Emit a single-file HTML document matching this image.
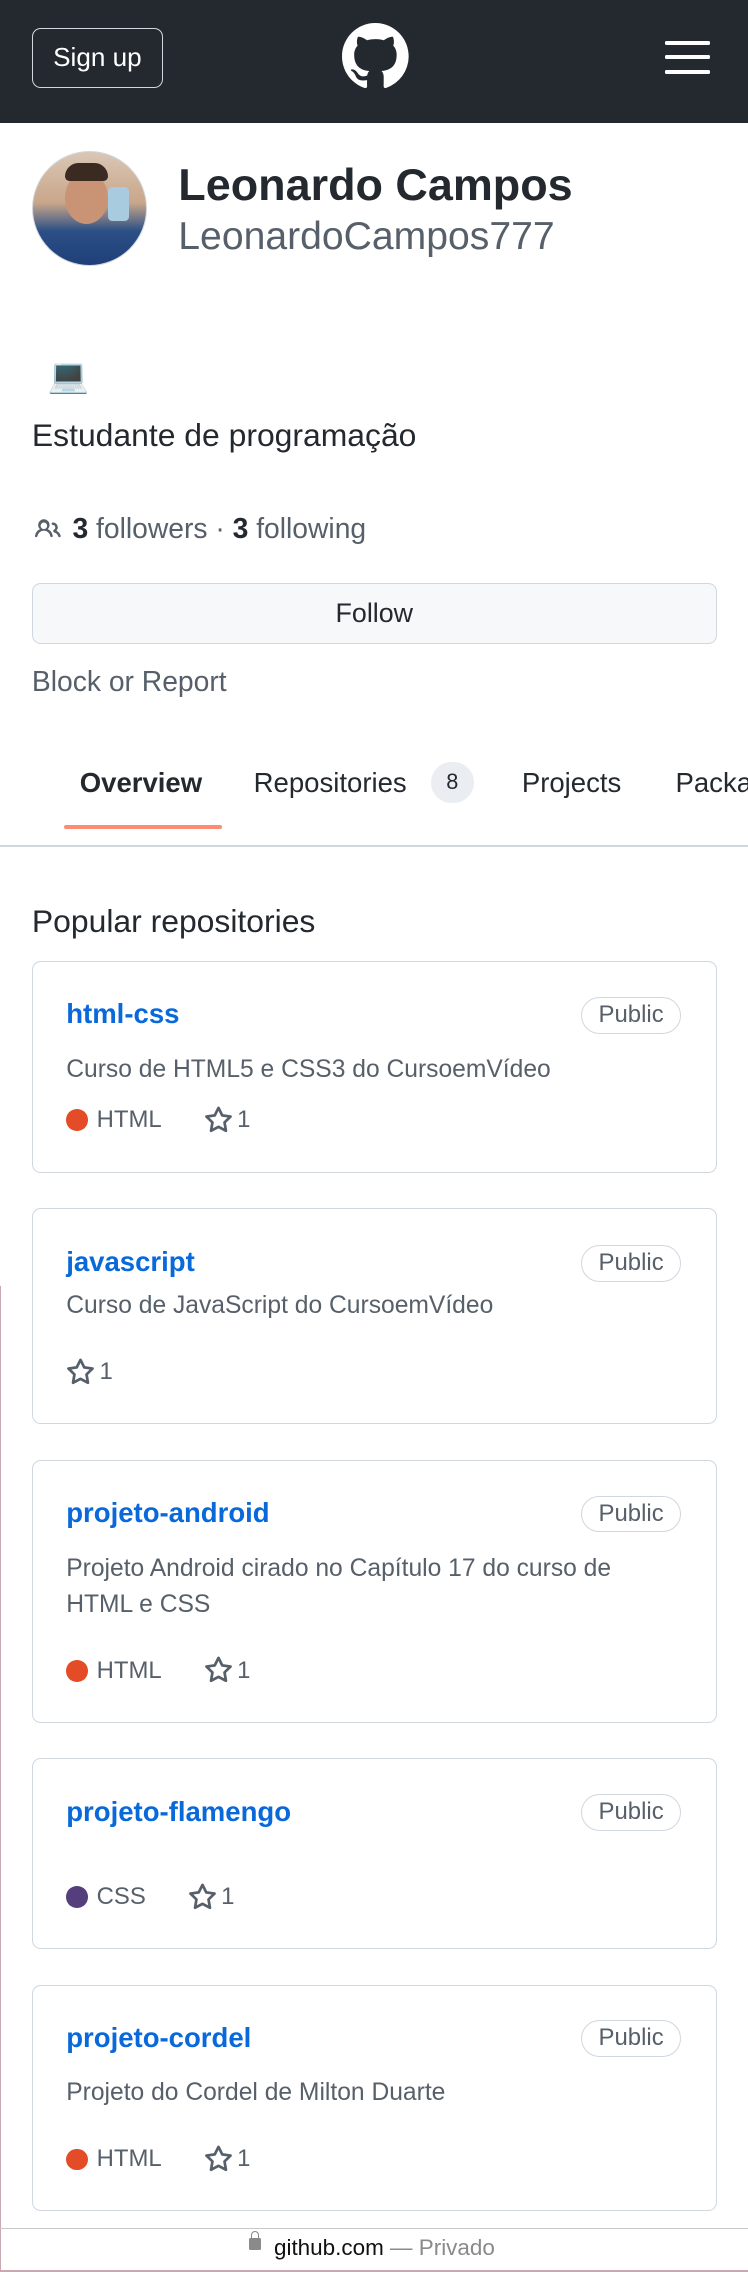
<!DOCTYPE html>
<html><head><meta charset="utf-8"><style>
html,body{margin:0;padding:0;background:#fff;}
body{width:748px;height:2271px;overflow:hidden;position:relative;}
#w{zoom:1.4496;width:516px;height:1567px;position:relative;overflow:hidden;font-family:"Liberation Sans",sans-serif;color:#24292f;}
.a{position:absolute;white-space:nowrap;}
.card{position:absolute;left:22px;width:471px;border:1px solid #d0d7de;border-radius:6px;}
.t{position:absolute;left:23px;font-size:19px;font-weight:bold;color:#0969da;}
.pub{position:absolute;left:378px;width:68px;height:24px;border:1px solid #d0d7de;border-radius:13px;font-size:16.5px;color:#57606a;text-align:center;line-height:24px;}
.d{position:absolute;left:23px;font-size:17px;color:#57606a;line-height:25px;}
.m{position:absolute;left:23px;font-size:16.5px;color:#57606a;display:flex;align-items:center;}
.dot{width:15px;height:15px;border-radius:50%;background:#e34c26;margin-right:6px;}
.st{margin-left:29px;margin-right:3px;}
</style></head><body><div id="w">
<div class="a" style="left:0;top:0;width:516px;height:85px;background:#24292f;"></div>
<div class="a" style="left:22px;top:19px;width:89px;height:40px;border:1px solid #d0d7de;border-radius:6px;color:#fff;font-size:18px;text-align:center;line-height:40px;">Sign up</div>
<svg class="a" style="left:236px;top:16px" width="46" height="46" viewBox="0 0 16 16"><path fill="#fff" d="M8 0C3.580 0 0 3.58 0 8c0 3.54 2.29 6.53 5.47 7.59.4.07.55-.17.55-.38 0-.19-.01-.82-.01-1.49-2.010.37-2.530-.49-2.690-.94-.09-.23-.48-.94-.82-1.130-.28-.15-.68-.52-.01-.53.63-.01 1.080.58 1.230.82.72 1.21 1.870.87 2.330.66.07-.52.28-.87.51-1.07-1.78-.2-3.64-.89-3.64-3.95 0-.87.31-1.59.82-2.15-.08-.2-.36-1.02.08-2.12 0 0 .67-.21 2.2.82.64-.18 1.32-.27 2-.27.68 0 1.36.09 2 .27 1.53-1.04 2.2-.82 2.2-.82.44 1.1.16 1.92.08 2.12.51.56.82 1.27.82 2.15 0 3.07-1.87 3.75-3.65 3.95.29.25.54.73.54 1.48 0 1.07-.01 1.93-.01 2.2 0 .21.15.46.55.38A8.013 8.013 0 0016 8c0-4.42-3.58-8-8-8z"/></svg>
<div class="a" style="left:459px;top:28px;width:31px;height:3px;background:#fff;border-radius:1px"></div>
<div class="a" style="left:459px;top:38px;width:31px;height:3px;background:#fff;border-radius:1px"></div>
<div class="a" style="left:459px;top:48px;width:31px;height:3px;background:#fff;border-radius:1px"></div>
<div class="a" style="left:22px;top:104px;width:78px;height:78px;border-radius:50%;border:1px solid #d0d7de;overflow:hidden;background:linear-gradient(180deg,#d9c7b5 0%,#c9a68a 45%,#2b4f86 70%,#1f3f78 100%);"><div style="position:absolute;left:22px;top:14px;width:30px;height:36px;border-radius:50%;background:#c99476"></div><div style="position:absolute;left:22px;top:8px;width:30px;height:12px;border-radius:12px 12px 4px 4px;background:#3a2a22"></div><div style="position:absolute;left:52px;top:24px;width:14px;height:24px;border-radius:3px;background:#a9cbe0"></div></div>
<div class="a" style="left:123px;top:110px;font-size:31px;font-weight:bold;">Leonardo Campos</div>
<div class="a" style="left:123px;top:148px;font-size:27px;color:#57606a;">LeonardoCampos777</div>
<div class="a" style="left:33px;top:246px;font-size:23px;">💻</div>
<div class="a" style="left:22px;top:288px;font-size:22px;">Estudante de programação</div>
<svg class="a" style="left:22px;top:356px" width="22" height="18" viewBox="0 0 16 16"><path fill="#57606a" d="M2 5.5a3.5 3.5 0 115.898 2.549 5.507 5.507 0 013.034 4.084.75.75 0 11-1.482.235 4.001 4.001 0 00-7.9 0 .75.75 0 01-1.482-.236A5.507 5.507 0 013.102 8.05 3.49 3.49 0 012 5.5zM11 4a.75.75 0 100 1.5 1.5 1.5 0 01.666 2.844.75.75 0 00-.416.672v.352a.75.75 0 00.574.73c1.2.289 2.162 1.2 2.522 2.372a.75.75 0 101.434-.44 5.01 5.01 0 00-2.560-3.012A3 3 0 0011 4zM5.5 4a2 2 0 100 4 2 2 0 000-4z"/></svg>
<div class="a" style="left:50px;top:353px;font-size:19.5px;color:#57606a;"><b style="color:#24292f">3</b> followers · <b style="color:#24292f">3</b> following</div>
<div class="a" style="left:22px;top:402px;width:471px;height:41px;background:#f6f8fa;border:1px solid #d0d7de;border-radius:6px;text-align:center;line-height:41px;font-size:18.5px;">Follow</div>
<div class="a" style="left:22px;top:459px;font-size:19.5px;color:#57606a;">Block or Report</div>
<div class="a" style="left:55px;top:529px;font-size:19px;font-weight:bold;">Overview</div>
<div class="a" style="left:44px;top:569px;width:109px;height:3px;background:#fd8c73;border-radius:2px"></div>
<div class="a" style="left:175px;top:529px;font-size:19px;">Repositories</div>
<div class="a" style="left:297px;top:526px;width:30px;height:28px;border-radius:14px;background:#eaeef2;font-size:15px;text-align:center;line-height:28px;">8</div>
<div class="a" style="left:360px;top:529px;font-size:19px;">Projects</div>
<div class="a" style="left:466px;top:529px;font-size:19px;">Packages</div>
<div class="a" style="left:0;top:583px;width:516px;height:1px;background:#d0d7de"></div>
<div class="a" style="left:22px;top:623px;font-size:22px;">Popular repositories</div>

<div class="card" style="top:663px;height:145px;">
<div class="t" style="top:25px">html-css</div><div class="pub" style="top:24px">Public</div>
<div class="d" style="top:62px">Curso de HTML5 e CSS3 do CursoemVídeo</div>
<div class="m" style="top:99px"><span class="dot"></span>HTML<svg class="st" width="20" height="20" viewBox="0 0 16 16"><path fill="#57606a" d="M8 .25a.75.75 0 01.673.418l1.882 3.815 4.21.612a.75.75 0 01.416 1.279l-3.046 2.97.719 4.192a.75.75 0 01-1.088.791L8 12.347l-3.766 1.98a.75.75 0 01-1.088-.79l.72-4.194L.818 6.374a.75.75 0 01.416-1.28l4.21-.611L7.327.668A.75.75 0 018 .25zm0 2.445L6.615 5.5a.75.75 0 01-.564.41l-3.097.45 2.24 2.184a.75.75 0 01.216.664l-.528 3.084 2.769-1.456a.75.75 0 01.698 0l2.77 1.456-.53-3.084a.75.75 0 01.216-.664l2.24-2.183-3.096-.45a.75.75 0 01-.564-.41L8 2.694z"/></svg>1</div>
</div>
<div class="card" style="top:833px;height:148px;">
<div class="t" style="top:26px">javascript</div><div class="pub" style="top:25px">Public</div>
<div class="d" style="top:55px">Curso de JavaScript do CursoemVídeo</div>
<div class="m" style="top:103px"><svg style="margin-right:3px" width="20" height="20" viewBox="0 0 16 16"><path fill="#57606a" d="M8 .25a.75.75 0 01.673.418l1.882 3.815 4.21.612a.75.75 0 01.416 1.279l-3.046 2.97.719 4.192a.75.75 0 01-1.088.791L8 12.347l-3.766 1.98a.75.75 0 01-1.088-.79l.72-4.194L.818 6.374a.75.75 0 01.416-1.28l4.21-.611L7.327.668A.75.75 0 018 .25zm0 2.445L6.615 5.5a.75.75 0 01-.564.41l-3.097.45 2.24 2.184a.75.75 0 01.216.664l-.528 3.084 2.769-1.456a.75.75 0 01.698 0l2.77 1.456-.53-3.084a.75.75 0 01.216-.664l2.24-2.183-3.096-.45a.75.75 0 01-.564-.41L8 2.694z"/></svg>1</div>
</div>
<div class="card" style="top:1007px;height:180px;">
<div class="t" style="top:25px">projeto-android</div><div class="pub" style="top:24px">Public</div>
<div class="d" style="top:62px">Projeto Android cirado no Capítulo 17 do curso de<br>HTML e CSS</div>
<div class="m" style="top:135px"><span class="dot"></span>HTML<svg class="st" width="20" height="20" viewBox="0 0 16 16"><path fill="#57606a" d="M8 .25a.75.75 0 01.673.418l1.882 3.815 4.21.612a.75.75 0 01.416 1.279l-3.046 2.97.719 4.192a.75.75 0 01-1.088.791L8 12.347l-3.766 1.98a.75.75 0 01-1.088-.79l.72-4.194L.818 6.374a.75.75 0 01.416-1.28l4.21-.611L7.327.668A.75.75 0 018 .25zm0 2.445L6.615 5.5a.75.75 0 01-.564.41l-3.097.45 2.24 2.184a.75.75 0 01.216.664l-.528 3.084 2.769-1.456a.75.75 0 01.698 0l2.77 1.456-.53-3.084a.75.75 0 01.216-.664l2.24-2.183-3.096-.45a.75.75 0 01-.564-.41L8 2.694z"/></svg>1</div>
</div>
<div class="card" style="top:1213px;height:130px;">
<div class="t" style="top:25px">projeto-flamengo</div><div class="pub" style="top:24px">Public</div>
<div class="m" style="top:85px"><span class="dot" style="background:#563d7c"></span>CSS<svg class="st" width="20" height="20" viewBox="0 0 16 16"><path fill="#57606a" d="M8 .25a.75.75 0 01.673.418l1.882 3.815 4.21.612a.75.75 0 01.416 1.279l-3.046 2.97.719 4.192a.75.75 0 01-1.088.791L8 12.347l-3.766 1.98a.75.75 0 01-1.088-.79l.72-4.194L.818 6.374a.75.75 0 01.416-1.28l4.21-.611L7.327.668A.75.75 0 018 .25zm0 2.445L6.615 5.5a.75.75 0 01-.564.41l-3.097.45 2.24 2.184a.75.75 0 01.216.664l-.528 3.084 2.769-1.456a.75.75 0 01.698 0l2.77 1.456-.53-3.084a.75.75 0 01.216-.664l2.24-2.183-3.096-.45a.75.75 0 01-.564-.41L8 2.694z"/></svg>1</div>
</div>
<div class="card" style="top:1369px;height:155px;">
<div class="t" style="top:25px">projeto-cordel</div><div class="pub" style="top:24px">Public</div>
<div class="d" style="top:62px">Projeto do Cordel de Milton Duarte</div>
<div class="m" style="top:110px"><span class="dot"></span>HTML<svg class="st" width="20" height="20" viewBox="0 0 16 16"><path fill="#57606a" d="M8 .25a.75.75 0 01.673.418l1.882 3.815 4.21.612a.75.75 0 01.416 1.279l-3.046 2.97.719 4.192a.75.75 0 01-1.088.791L8 12.347l-3.766 1.98a.75.75 0 01-1.088-.79l.72-4.194L.818 6.374a.75.75 0 01.416-1.28l4.21-.611L7.327.668A.75.75 0 018 .25zm0 2.445L6.615 5.5a.75.75 0 01-.564.41l-3.097.45 2.24 2.184a.75.75 0 01.216.664l-.528 3.084 2.769-1.456a.75.75 0 01.698 0l2.77 1.456-.53-3.084a.75.75 0 01.216-.664l2.24-2.183-3.096-.45a.75.75 0 01-.564-.41L8 2.694z"/></svg>1</div>
</div>
<div class="a" style="left:0;top:887px;width:1px;height:680px;background:#c9a9b0"></div>
<div class="a" style="left:0;top:1537px;width:516px;height:1px;background:#c8c8c8"></div>
<div class="a" style="left:0;top:1566px;width:516px;height:1px;background:#c9a9b0"></div>
<div class="a" style="left:172px;top:1544px;width:8px;height:8px;background:#8a8a8a;border-radius:1px"></div>
<div class="a" style="left:173px;top:1539px;width:4px;height:6px;border:1px solid #8a8a8a;border-bottom:none;border-radius:3px 3px 0 0"></div>
<div class="a" style="left:189px;top:1542px;font-size:15.5px;color:#111;">github.com <span style="color:#8a8a8a">— Privado</span></div>
</div></body></html>
